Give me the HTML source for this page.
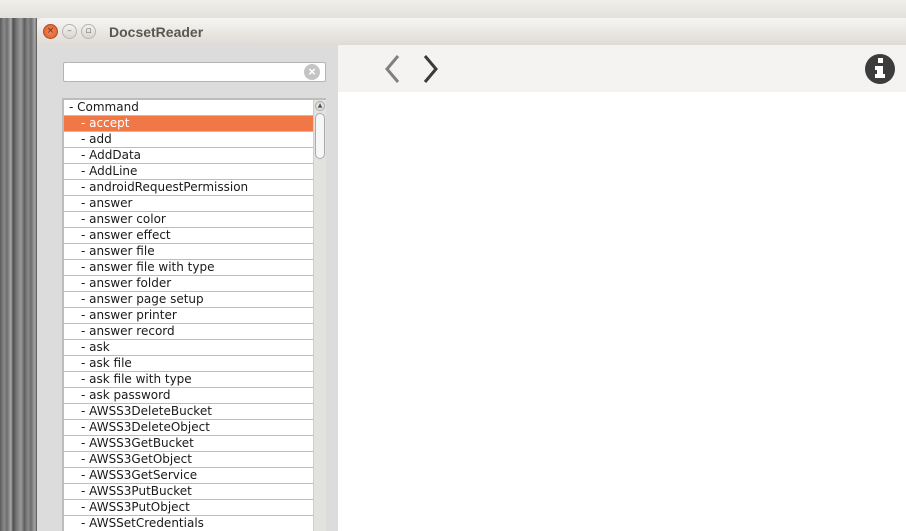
<!DOCTYPE html>
<html><head><style>
*{margin:0;padding:0;box-sizing:border-box}
body{width:906px;height:531px;overflow:hidden;position:relative;background:#e9e7e3;font-family:"DejaVu Sans","Liberation Sans",sans-serif}
.wood{position:absolute;left:0;top:18px;width:37px;height:513px;background:repeating-linear-gradient(90deg,#5a5a5a 0,#8a8a8a 4px,#6e6e6e 7px,#a8a8a8 11px,#505050 13px,#7a7a7a 17px,#999 21px,#666 24px)}
.top{position:absolute;left:0;top:0;width:906px;height:18px;background:linear-gradient(#f0efec,#e4e1dc)}
.win{position:absolute;left:37px;top:18px;width:869px;height:513px;background:#dcdcdc;border-radius:6px 0 0 0;overflow:hidden}
.title{position:absolute;left:0;top:0;width:869px;height:27px;background:linear-gradient(#f6f5f3,#dfdbd5);}
.title span{position:absolute;left:72px;top:6px;font:bold 14px "Liberation Sans",sans-serif;color:#5a5750}
.btn{position:absolute;top:6px;width:15px;height:15px;border-radius:50%;border:1px solid #b8b4ad;background:linear-gradient(#f4f3f1,#d8d5d0);font-size:9px;line-height:13px;text-align:center;color:#666}
.right{position:absolute;left:301px;top:27px;width:568px;height:486px;background:#fff}
.tool{position:absolute;left:0;top:0;width:568px;height:47px;background:#f4f3f1}
.search{position:absolute;left:26px;top:44px;width:263px;height:20px;background:#fff;border:1px solid #b4b4b4;border-radius:2px}
.clr{position:absolute;right:5px;top:1px;width:16px;height:16px;border-radius:50%;background:#c4c4c4;color:#fff;font:bold 13px/16px sans-serif;text-align:center}
.list{position:absolute;left:25px;top:80px;width:264px;height:440px;background:#fff;border:2px solid #bdbdbd;border-bottom:none}
.row{height:16px;border-bottom:1px solid #bdbdbd;font-size:12px;line-height:15px;color:#1a1a1a;padding-left:17px;width:249px;white-space:nowrap}
.row.h{padding-left:5px}
.row.sel{background:#f07846;color:#fff}
.sb{position:absolute;left:249px;top:0;width:13px;height:440px;background:#e4e2df;border-left:1px solid #cfcfcf}
.thumb{position:absolute;left:1px;top:13px;width:10px;height:46px;border:1px solid #aaa;border-radius:5px;background:#f6f6f6}
</style></head><body>
<div class="top"></div>
<div class="wood"></div>
<div class="win">
 <div class="title">
  <div class="btn" style="left:6px;background:radial-gradient(#f08a5a,#e0582a);border-color:#b84a20;color:#6a2a10">×</div>
  <div class="btn" style="left:25px">–</div>
  <div class="btn" style="left:44px">▫</div>
  <span>DocsetReader</span>
 </div>
 <div class="search"><div class="clr">×</div></div>
 <div class="list">
  <div class="row h">- Command</div>
  <div class="row sel">- accept</div>
  <div class="row">- add</div>
  <div class="row">- AddData</div>
  <div class="row">- AddLine</div>
  <div class="row">- androidRequestPermission</div>
  <div class="row">- answer</div>
  <div class="row">- answer color</div>
  <div class="row">- answer effect</div>
  <div class="row">- answer file</div>
  <div class="row">- answer file with type</div>
  <div class="row">- answer folder</div>
  <div class="row">- answer page setup</div>
  <div class="row">- answer printer</div>
  <div class="row">- answer record</div>
  <div class="row">- ask</div>
  <div class="row">- ask file</div>
  <div class="row">- ask file with type</div>
  <div class="row">- ask password</div>
  <div class="row">- AWSS3DeleteBucket</div>
  <div class="row">- AWSS3DeleteObject</div>
  <div class="row">- AWSS3GetBucket</div>
  <div class="row">- AWSS3GetObject</div>
  <div class="row">- AWSS3GetService</div>
  <div class="row">- AWSS3PutBucket</div>
  <div class="row">- AWSS3PutObject</div>
  <div class="row">- AWSSetCredentials</div>
  <div class="sb"><div style="position:absolute;left:1px;top:1px;width:10px;height:10px;border-radius:50%;border:1px solid #aaa;font-size:6px;line-height:8px;text-align:center;color:#555">▲</div><div class="thumb"></div></div>
 </div>
 <div class="right">
  <div class="tool">
   <svg style="position:absolute;left:44px;top:8px" width="30" height="36"><path d="M16 3 L5 16 L16 29" stroke="#808080" stroke-width="3" fill="none"/></svg>
   <svg style="position:absolute;left:82px;top:8px" width="30" height="36"><path d="M5 3 L16 16 L5 29" stroke="#3a3a3a" stroke-width="3" fill="none"/></svg>
   <svg style="position:absolute;left:526px;top:8px" width="32" height="32"><circle cx="16" cy="16" r="15" fill="#3c3c3c"/><rect x="14" y="5" width="5" height="5" fill="#fff"/><path d="M11 13h8v8h2v4h-10v-4h2v-4h-2z" fill="#fff"/></svg>
  </div>
 </div>
</div>
</body></html>
